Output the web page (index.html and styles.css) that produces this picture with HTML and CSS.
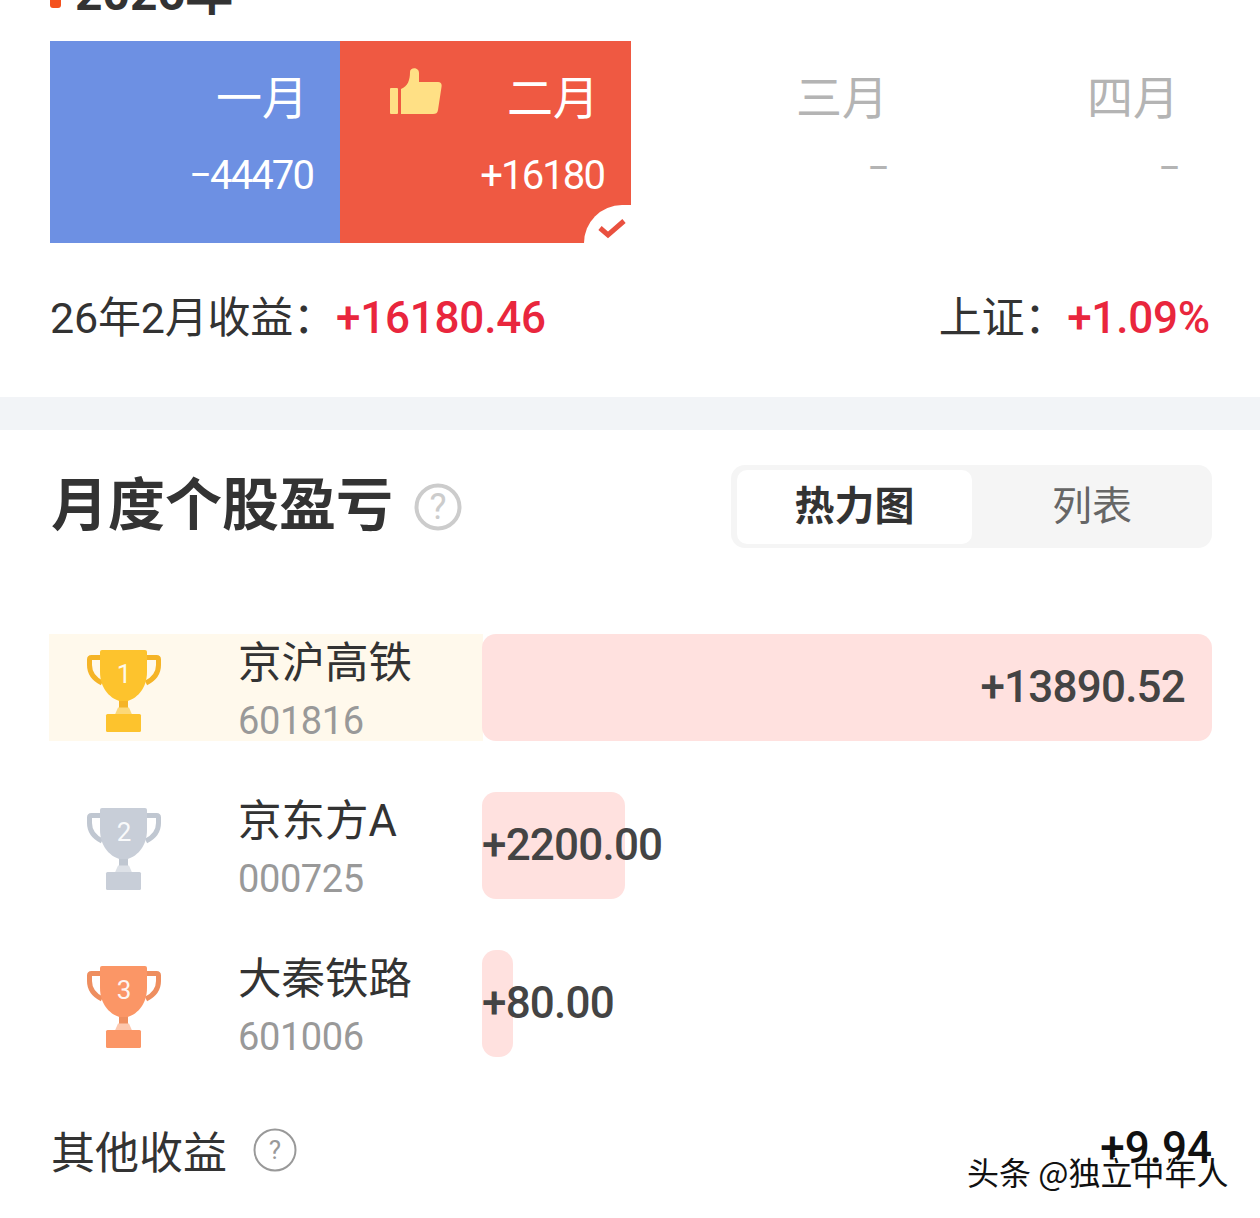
FILE: index.html
```html
<!DOCTYPE html>
<html lang="zh">
<head>
<meta charset="utf-8">
<title>月度个股盈亏</title>
<link rel="stylesheet" href="styles.css">
</head>
<body>
<svg class="defs" width="0" height="0" aria-hidden="true">
  <symbol id="trophy" viewBox="0 0 74 84">
    <path class="t-arm" d="M14 7.500H4.500Q2.500 7.500 2.500 9.500V15C2.500 24 7 29 15 33M60 7.500H69.500Q71.500 7.500 71.500 9.500V15C71.500 24 67 29 59 33"/>
    <path class="t-cup" d="M13 2Q13 0 15 0H58Q60 0 60 2V22C60 38 50 50 36.500 52C23 50 13 38 13 22Z"/>
    <rect class="t-stem" x="32" y="51" width="9" height="7"/>
    <path class="t-neck" d="M31 57.500H42L45 64.500H28Z"/>
    <rect class="t-cup" x="19" y="64" width="35" height="18" rx="1.500"/>
  </symbol>
</svg>

<main class="page">
  <section class="calendar">
    <h2 class="year"><i class="year-mark"></i>2026年</h2>
    <div class="months">
      <div class="month loss"><span class="m-name">一月</span><span class="m-value">−44470</span></div>
      <div class="month gain">
        <svg class="thumb" viewBox="0 0 52 46"><rect x="0" y="20" width="8" height="26" rx="1"/><path d="M11 21C18 18 20 12 20 4C20 -1 29 -1 29 5V14H48C51 14 52 16 51.500 19L48 42C47.500 45 46 46 43 46H11Z"/></svg>
        <span class="m-name">二月</span><span class="m-value">+16180</span>
        <span class="check"><svg viewBox="0 0 30 22"><path d="M3 11L11 18L27 4" fill="none" stroke-width="5"/></svg></span>
      </div>
      <div class="month empty"><span class="m-name">三月</span><span class="m-value">−</span></div>
      <div class="month empty"><span class="m-name">四月</span><span class="m-value">−</span></div>
    </div>
    <div class="summary">
      <p class="sum-item">26年2月收益：<b class="red">+16180.46</b></p>
      <p class="sum-item">上证：<b class="red">+1.09%</b></p>
    </div>
  </section>

  <div class="band"></div>

  <section class="stocks">
    <header class="stocks-head">
      <h1 class="title">月度个股盈亏</h1>
      <svg class="help help-lg" viewBox="0 0 48 48"><circle cx="24" cy="24" r="21.500" fill="none" stroke-width="4"/><text x="24" y="36" text-anchor="middle">?</text></svg>
      <div class="tabs">
        <span class="tab active">热力图</span>
        <span class="tab">列表</span>
      </div>
    </header>

    <div class="rows">
      <div class="row first">
        <svg class="trophy gold" viewBox="0 0 74 84"><use href="#trophy"/><text x="37" y="33" text-anchor="middle">1</text></svg>
        <div class="stock"><span class="s-name">京沪高铁</span><span class="s-code">601816</span></div>
        <div class="track"><div class="bar full" style="width:730px"><span class="val">+13890.52</span></div></div>
      </div>
      <div class="row">
        <svg class="trophy silver" viewBox="0 0 74 84"><use href="#trophy"/><text x="37" y="33" text-anchor="middle">2</text></svg>
        <div class="stock"><span class="s-name">京东方A</span><span class="s-code">000725</span></div>
        <div class="track"><div class="bar" style="width:143px"><span class="val">+2200.00</span></div></div>
      </div>
      <div class="row">
        <svg class="trophy bronze" viewBox="0 0 74 84"><use href="#trophy"/><text x="37" y="33" text-anchor="middle">3</text></svg>
        <div class="stock"><span class="s-name">大秦铁路</span><span class="s-code">601006</span></div>
        <div class="track"><div class="bar" style="width:31px"><span class="val">+80.00</span></div></div>
      </div>
    </div>

    <footer class="other">
      <span class="o-name">其他收益</span>
      <svg class="help help-sm" viewBox="0 0 44 44"><circle cx="22" cy="22" r="20.500" fill="none" stroke-width="2"/><text x="22" y="31" text-anchor="middle">?</text></svg>
      <span class="o-val">+9.94</span>
    </footer>
  </section>
  <div class="watermark">头条 @独立中年人</div>
</main>
</body>
</html>
```

FILE: styles.css
```css
* { box-sizing: border-box; }
html, body { margin: 0; padding: 0; background: #fff; }
body { font-family: "Noto Sans CJK SC", "Noto Sans", sans-serif; color: #333; }
.defs { position: absolute; }
.page { position: relative; width: 1260px; height: 1218px; overflow: hidden; }

.calendar { display: flow-root; padding: 0 48px 0 50px; height: 397px; }
.year { display: flex; align-items: center; gap: 14px; height: 41px; margin: -27px 0 27px; font: 700 48px/41px "Roboto", "Noto Sans CJK SC", sans-serif; color: #333; }
.year-mark { width: 11px; height: 30px; margin-top: -1px; background: #f4511e; border-radius: 3px; }

.months { display: grid; grid-template-columns: 290px 291px 290px 291px; height: 202px; }
.month { position: relative; display: flex; flex-direction: column; align-items: flex-end; padding: 23px 27px 0 0; overflow: hidden; }
.loss { background: #6d90e3; color: #fff; }
.gain { background: #ef5942; color: #fff; }
.empty { color: #b4b4b4; }
.m-name { font-size: 46px; line-height: 60px; margin-right: 5px; }
.empty .m-name { margin-right: 6px; }
.m-value { font: 400 40px/44px "Roboto", sans-serif; letter-spacing: -1.900px; margin-top: 30px; }
.empty .m-value { margin-top: 23px; margin-right: 4px; letter-spacing: 0; }
.thumb { position: absolute; left: 50px; top: 27px; width: 52px; height: 46px; fill: #ffe085; }
.check { position: absolute; right: 0; bottom: 0; width: 47px; height: 38px; background: #fff; border-radius: 40px 0 0 0; }
.check svg { position: absolute; left: 13px; top: 12px; width: 30px; height: 22px; stroke: #e9503f; }

.summary { display: flex; justify-content: space-between; align-items: center; height: 60px; margin: 45px 2px 0 0; }
.sum-item { margin: 0; font: 400 43px/60px "Roboto", "Noto Sans CJK SC", sans-serif; letter-spacing: -.2px; color: #333; }
.red { font-size: 44px; font-weight: 500; color: #e9263d; letter-spacing: -.2px; }

.band { height: 33px; background: #f2f4f7; }

.stocks { padding: 35px 48px 0 49px; }
.stocks-head { display: flex; align-items: center; height: 83px; padding-left: 2px; }
.title { margin: 0 0 13px; font-size: 57px; line-height: 70px; font-weight: 700; color: #333; }
.help { stroke: #ccc; }
.help text { stroke: none; font-family: "Roboto", sans-serif; }
.help-lg { width: 48px; height: 48px; margin-left: 21px; }
.help-lg text { fill: #ccc; font-size: 36px; }
.help-sm { width: 44px; height: 44px; margin-left: 26px; stroke: #999; }
.help-sm text { fill: #999; font-size: 26px; }
.tabs { display: flex; margin-left: auto; width: 481px; height: 83px; padding: 5px 0 4px 6px; background: #f5f5f5; border-radius: 14px; }
.tab { flex: 1; display: flex; align-items: center; justify-content: center; padding-bottom: 8px; font-size: 40px; color: #666; }
.tab.active { flex: 0 0 235px; background: #fff; color: #333; font-weight: 700; border-radius: 10px; }

.rows { display: flex; flex-direction: column; gap: 51px; margin-top: 86px; }
.row { display: flex; height: 107px; }
.row.first { background: linear-gradient(#fff9ec, #fff9ec) left / 434px 100% no-repeat; }
.trophy { flex: none; width: 74px; height: 84px; margin: 16px 0 0 38px; }
.trophy text { font: 400 26px "Roboto", sans-serif; fill: #fff; opacity: .9; }
.t-cup { fill: var(--cup); }
.t-stem { fill: var(--arm); }
.t-arm { fill: none; stroke: var(--arm); stroke-width: 5; }
.t-neck { fill: var(--neck); }
.gold { --cup: #fdc32d; --arm: #f5b427; --neck: #fcd878; }
.silver { --cup: #c8ced8; --arm: #c0c7d1; --neck: #dde1e7; }
.bronze { --cup: #fb9666; --arm: #ee8e5f; --neck: #fdc7ad; }
.stock { flex: none; display: flex; flex-direction: column; width: 244px; margin-left: 77px; }
.s-name { font: 400 43.500px/60px "Roboto", "Noto Sans CJK SC", sans-serif; color: #333; }
.s-code { font: 400 38px/54px "Roboto", sans-serif; color: #999; letter-spacing: -.4px; }
.track { flex: 1; }
.bar { display: flex; align-items: center; height: 107px; background: #ffe1df; border-radius: 14px; }
.bar.full { justify-content: flex-end; padding-right: 27px; }
.val { flex: none; font: 500 44px/107px "Roboto", sans-serif; color: #444; letter-spacing: -.8px; }

.other { display: flex; align-items: center; height: 60px; margin-top: 63px; padding-left: 2px; }
.o-name { font-size: 44px; line-height: 60px; color: #333; }
.o-val { margin-left: auto; font: 500 44px/60px "Roboto", sans-serif; color: #111; position: relative; top: -2px; }

.watermark { position: absolute; left: 967px; top: 1148px; font: 400 32px/46px "Noto Sans CJK SC", sans-serif; color: #111; white-space: nowrap; text-shadow: 1px 1px 0 #fff, -1px -1px 0 #fff, 2px 2px 1px #fff; }
```
